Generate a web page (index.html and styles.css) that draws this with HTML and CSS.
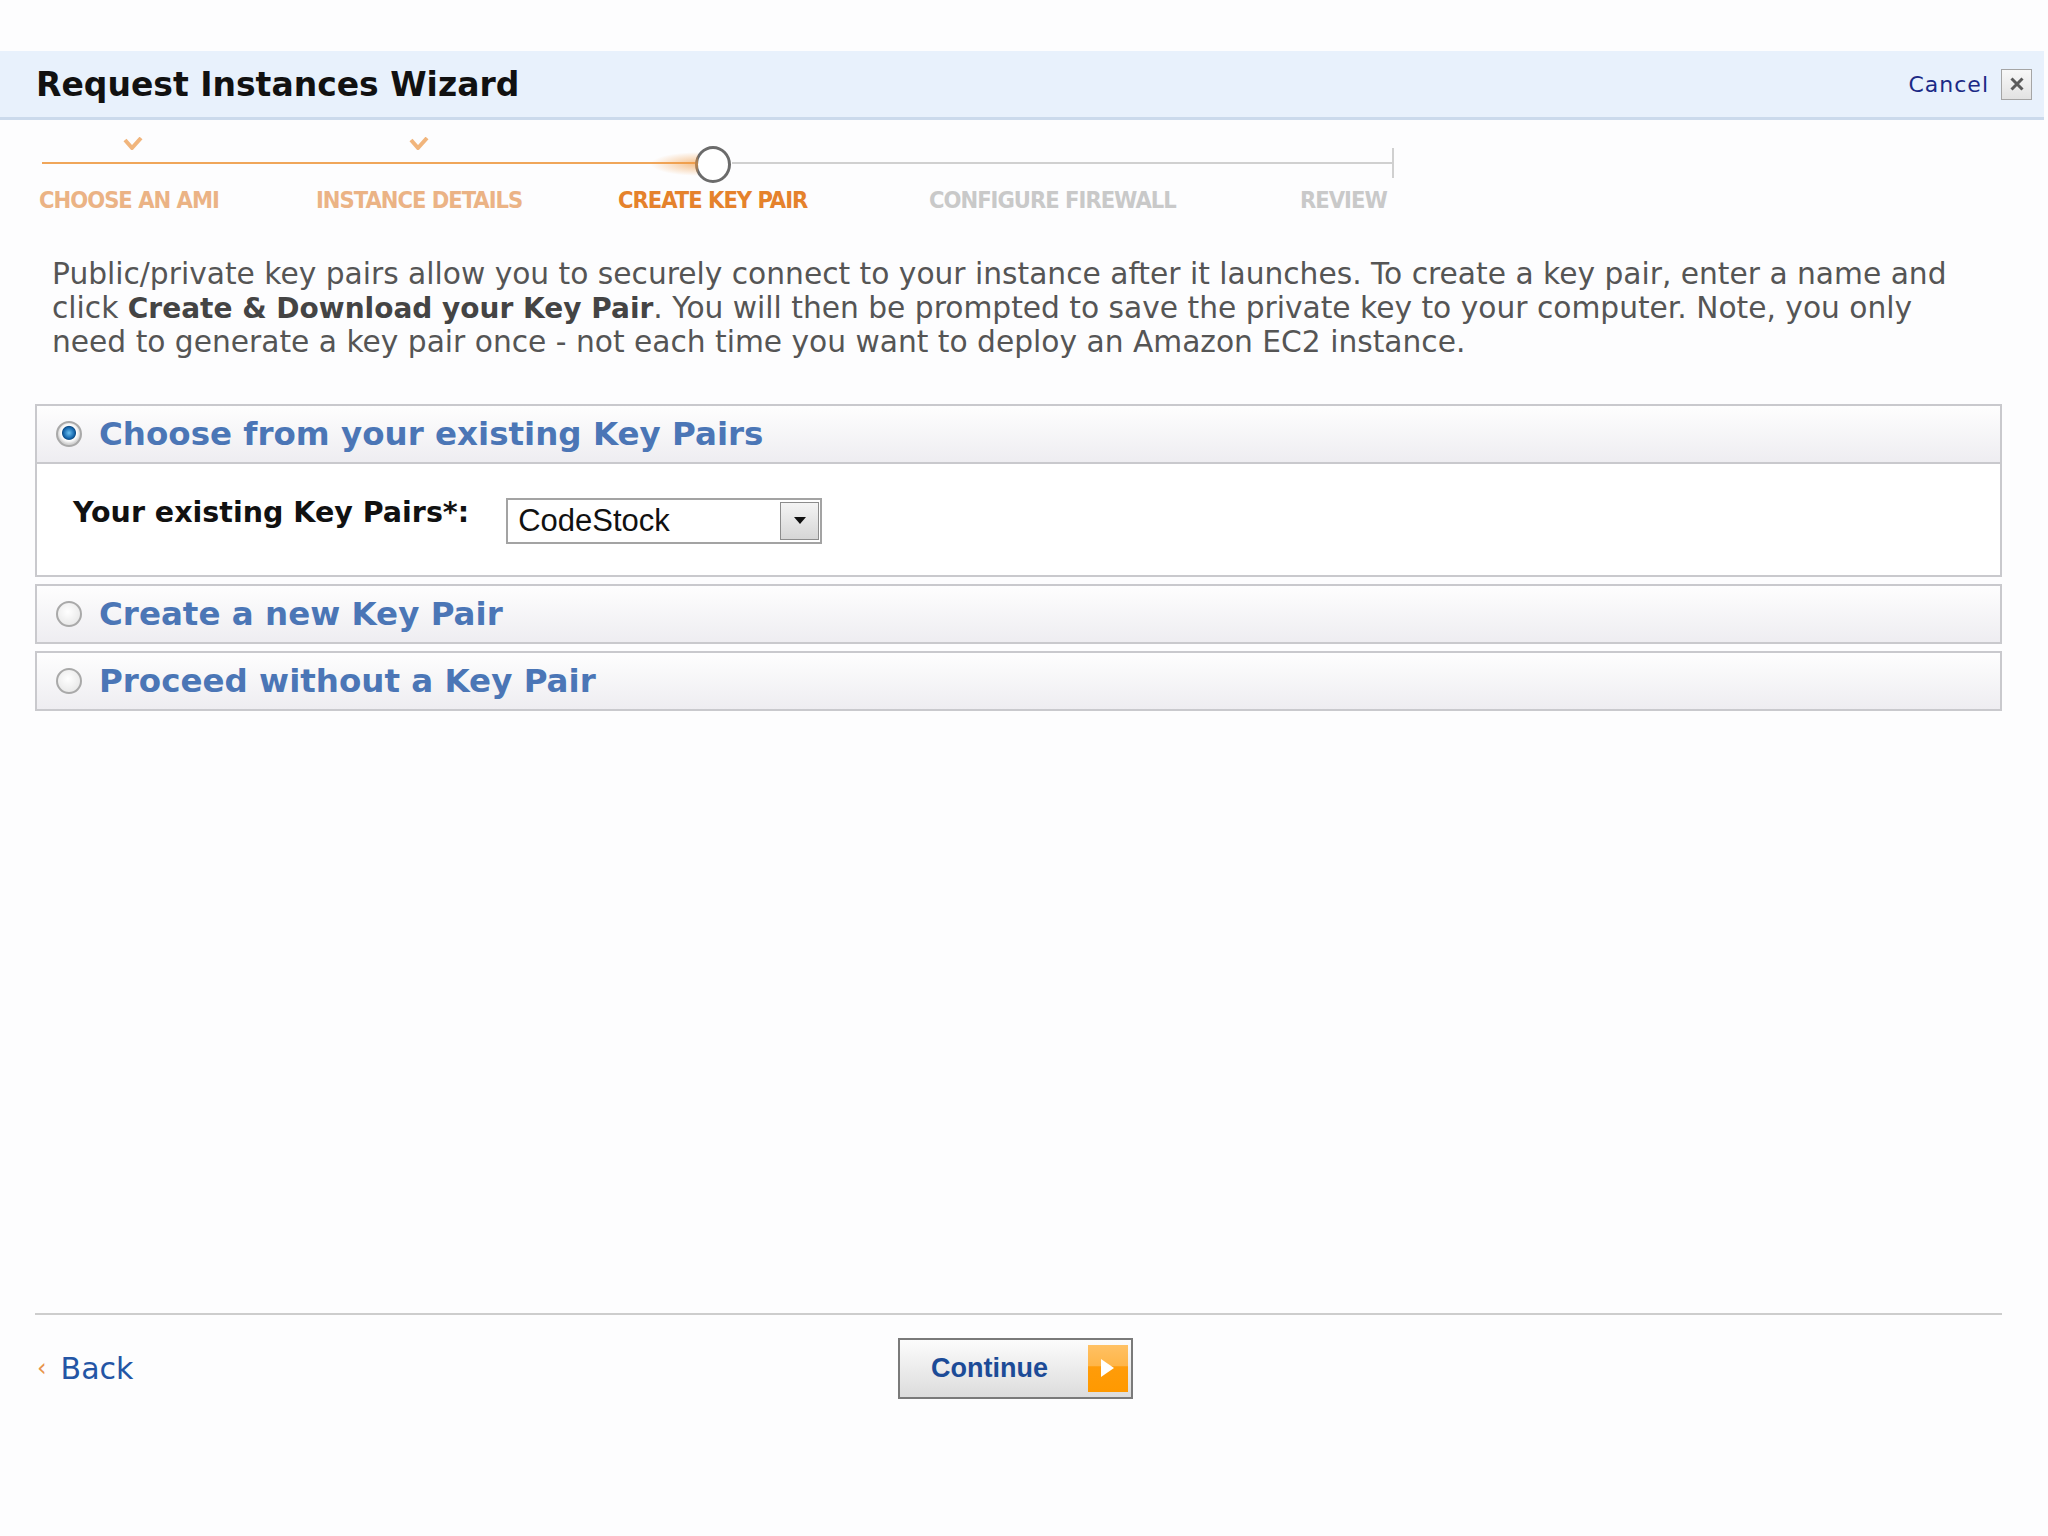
FILE: index.html
```html
<!DOCTYPE html>
<html lang="en">

<head>
    <meta charset="UTF-8">
    <meta name="viewport" content="width=device-width, initial-scale=1.0">
    <title>Request Instances Wizard</title>
    <link rel="stylesheet" href="styles.css">
</head>

<body>
    <div class="wizard">
        <div class="wizard-head">
            <h1>Request Instances Wizard</h1>
            <div class="cancel">
                <a href="#">Cancel</a>
                <span class="close-box">
                    <svg width="16" height="16" viewBox="0 0 16 16"><path d="M2.5 2.5 L13.5 13.5 M13.5 2.5 L2.5 13.5" stroke="#5a5a5a" stroke-width="3" /></svg>
                </span>
            </div>
        </div>

        <!-- progress of the wizard -->
        <div class="steps">
            <div class="track track-done"></div>
            <div class="track track-todo"></div>
            <div class="track track-end"></div>

            <div class="step done">
                <div class="mark"><svg class="check first" viewBox="0 0 20 13"><path d="M2 3 L9 11 L18 1" fill="none" stroke="#f1b57c" stroke-width="4" stroke-linejoin="round" /></svg></div>
                <span class="label">CHOOSE AN AMI</span>
            </div>
            <div class="step done">
                <div class="mark"><svg class="check" viewBox="0 0 20 13"><path d="M2 3 L9 11 L18 1" fill="none" stroke="#f1b57c" stroke-width="4" stroke-linejoin="round" /></svg></div>
                <span class="label">INSTANCE DETAILS</span>
            </div>
            <div class="step current">
                <div class="mark"><span class="dot"></span></div>
                <span class="label">CREATE KEY PAIR</span>
            </div>
            <div class="step">
                <div class="mark"></div>
                <span class="label">CONFIGURE FIREWALL</span>
            </div>
            <div class="step">
                <div class="mark"></div>
                <span class="label">REVIEW</span>
            </div>
        </div>

        <p class="intro">Public/private key pairs allow you to securely connect to your instance after it launches. To create a key pair, enter a name and<br>
            click <b>Create &amp; Download your Key Pair</b>. You will then be prompted to save the private key to your computer. Note, you only<br>
            need to generate a key pair once - not each time you want to deploy an Amazon EC2 instance.</p>

        <div class="options">
            <div class="option">
                <div class="option-head"><span class="radio on"></span>Choose from your existing Key Pairs</div>
                <div class="option-body">
                    <label>Your existing Key Pairs*:</label>
                    <div class="select">
                        <span>CodeStock</span>
                        <span class="arrow"><svg width="14" height="9" viewBox="0 0 14 9"><path d="M1 1 L13 1 L7 8 Z" fill="#111" /></svg></span>
                    </div>
                </div>
            </div>
            <div class="option">
                <div class="option-head"><span class="radio"></span>Create a new Key Pair</div>
            </div>
            <div class="option">
                <div class="option-head"><span class="radio"></span>Proceed without a Key Pair</div>
            </div>
        </div>

        <div class="wizard-foot">
            <a href="#" class="back"><span class="chev">&lsaquo;</span>Back</a>
            <button class="continue">Continue
                <span class="go"><svg width="15" height="20" viewBox="0 0 15 20"><path d="M1 1 L14 10 L1 19 Z" fill="#fff" /></svg></span>
            </button>
            <span></span>
        </div>
    </div>
</body>

</html>
```

FILE: styles.css
```css
* {
    box-sizing: border-box;
}

body {
    margin: 0;
    background: #fdfdfe;
    font-family: "DejaVu Sans", Verdana, sans-serif;
}

.wizard {
    padding-top: 51px;
}

.wizard-head {
    display: flex;
    align-items: center;
    justify-content: space-between;
    height: 69px;
    margin-right: 4px;
    padding: 0 12px 0 36px;
    background: #e8f1fc;
    border-bottom: 3px solid #cbdaec;
}

h1 {
    margin: 0;
    font-size: 33px;
    font-weight: bold;
    color: #111;
}

.cancel {
    display: flex;
    align-items: center;
    gap: 12px;
}

.cancel a {
    color: #1b2a86;
    font-size: 22px;
    letter-spacing: 1px;
    text-decoration: none;
}

.close-box {
    width: 31px;
    height: 31px;
    display: flex;
    align-items: center;
    justify-content: center;
    border: 1px solid #a5a5a5;
    background: linear-gradient(#f8f8f8, #e2e2e2);
}

/* steps */
.steps {
    position: relative;
    height: 95px;
    padding-left: 39px;
    display: grid;
    grid-template-columns: 277px 302px 311px 371px auto;
}

.track {
    position: absolute;
    height: 2px;
    top: 42px;
}

.track-done {
    left: 42px;
    width: 655px;
    background: #f0a65a;
}

.track-todo {
    left: 732px;
    width: 661px;
    background: #d0d0d0;
}

.track-end {
    left: 1392px;
    top: 28px;
    width: 2px;
    height: 30px;
    background: #d0d0d0;
}

.step {
    justify-self: start;
    display: flex;
    flex-direction: column;
    align-items: center;
}

.mark {
    height: 62px;
    display: flex;
    justify-content: center;
}

.check {
    width: 20px;
    height: 13px;
    margin-top: 17px;
}

.check.first {
    margin-left: 8px;
}

.dot {
    position: relative;
    width: 36px;
    height: 37px;
    margin-top: 26px;
    border: 3px solid #6b6b6b;
    border-radius: 50%;
    background: #fff;
}

.dot::before {
    content: "";
    position: absolute;
    right: 100%;
    top: 3px;
    width: 48px;
    height: 24px;
    background: radial-gradient(ellipse at right, rgba(240, 150, 60, .6), rgba(240, 150, 60, 0) 70%);
}

.label {
    margin-top: 3px;
    font-family: "Liberation Sans Narrow", "DejaVu Sans Condensed", "Liberation Sans", sans-serif;
    font-weight: bold;
    font-size: 23.5px;
    letter-spacing: -1px;
    line-height: 30px;
    color: #c9c9c9;
}

.step.done .label {
    color: #ebb385;
}

.step.current .label {
    color: #e5822c;
}

/* text */
.intro {
    margin: 42px 0 0 52px;
    font-size: 29.7px;
    line-height: 33.5px;
    color: #555;
}

.intro b {
    font-size: 28px;
    color: #444;
}

/* options */
.options {
    margin: 45px 46px 0 35px;
}

.option {
    border: 2px solid #c9c9cd;
}

.option + .option {
    margin-top: 7px;
}

.option-head {
    height: 56px;
    display: flex;
    align-items: center;
    gap: 17px;
    padding-left: 19px;
    background: linear-gradient(#fefefe, #eeedf1);
    font-size: 32.5px;
    font-weight: bold;
    color: #4b76b6;
}

.radio {
    flex: none;
    width: 26px;
    height: 26px;
    border-radius: 50%;
    border: 2px solid #a9a9a9;
    background: radial-gradient(circle at 45% 40%, #fff 0, #e2e2e2 100%);
}

.radio.on {
    background: radial-gradient(circle at 50% 45%, #6cc0f0 0, #1a6db3 5px, #0e4f8a 6.5px, #fff 7.5px, #f1f1f1 9px, #d4d4d4 11px);
}

.option-body {
    height: 113px;
    display: flex;
    align-items: flex-start;
    gap: 37px;
    padding: 32px 0 0 36px;
    border-top: 2px solid #c9c9cd;
    background: #fff;
}

.option-body label {
    font-size: 28.5px;
    line-height: 34px;
    font-weight: bold;
    color: #111;
}

.select {
    width: 316px;
    height: 46px;
    margin-top: 2px;
    display: flex;
    align-items: center;
    justify-content: space-between;
    padding: 2px 1px 2px 10px;
    border: 2px solid #a3a3a3;
    background: #fff;
    font-family: "Liberation Sans", Arial, sans-serif;
    font-size: 31px;
    color: #111;
}

.arrow {
    width: 39px;
    height: 100%;
    display: flex;
    align-items: center;
    justify-content: center;
    border: 1px solid #8c8c8c;
    background: linear-gradient(#f4f4f4, #d6d6d6);
}

/* footer */
.wizard-foot {
    margin: 602px 46px 0 35px;
    padding-top: 23px;
    border-top: 2px solid #cdcdcd;
    display: grid;
    grid-template-columns: 1fr auto 1fr;
    align-items: center;
}

.back {
    display: flex;
    align-items: center;
    gap: 14px;
    padding-left: 2px;
    font-size: 30px;
    color: #2355a5;
    text-decoration: none;
}

.chev {
    font-size: 24px;
    color: #e8944a;
}

.continue {
    height: 61px;
    margin-left: -6px;
    display: flex;
    align-items: center;
    gap: 40px;
    padding: 0 3px 0 31px;
    border: 2px solid #7a7a7a;
    background: linear-gradient(#fcfcfc, #dcdcdc);
    font-family: "Liberation Sans", Arial, sans-serif;
    font-weight: bold;
    font-size: 27px;
    color: #1c4b97;
}

.go {
    width: 40px;
    height: 47px;
    display: flex;
    align-items: center;
    justify-content: center;
    background: linear-gradient(#ffc164 0, #ffb547 45%, #ff9c0a 46%, #ff9900);
}
```
